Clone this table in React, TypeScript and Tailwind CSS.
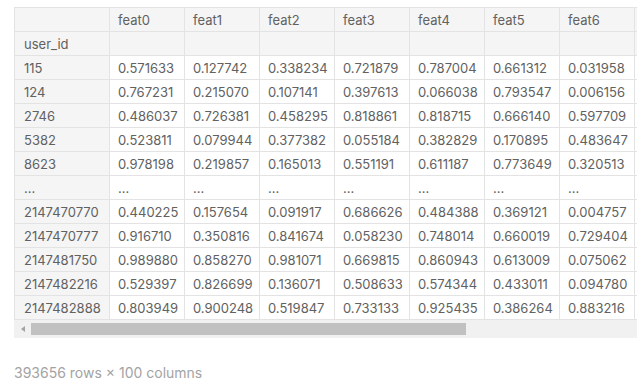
import React from 'react';

const cols = ['feat0', 'feat1', 'feat2', 'feat3', 'feat4', 'feat5', 'feat6', 'feat7'];

const rows: [string, string[]][] = [
  ['115', ['0.571633', '0.127742', '0.338234', '0.721879', '0.787004', '0.661312', '0.031958', '0.412345']],
  ['124', ['0.767231', '0.215070', '0.107141', '0.397613', '0.066038', '0.793547', '0.006156', '0.512345']],
  ['2746', ['0.486037', '0.726381', '0.458295', '0.818861', '0.818715', '0.666140', '0.597709', '0.312345']],
  ['5382', ['0.523811', '0.079944', '0.377382', '0.055184', '0.382829', '0.170895', '0.483647', '0.212345']],
  ['8623', ['0.978198', '0.219857', '0.165013', '0.551191', '0.611187', '0.773649', '0.320513', '0.112345']],
  ['...', ['...', '...', '...', '...', '...', '...', '...', '...']],
  ['2147470770', ['0.440225', '0.157654', '0.091917', '0.686626', '0.484388', '0.369121', '0.004757', '0.612345']],
  ['2147470777', ['0.916710', '0.350816', '0.841674', '0.058230', '0.748014', '0.660019', '0.729404', '0.712345']],
  ['2147481750', ['0.989880', '0.858270', '0.981071', '0.669815', '0.860943', '0.613009', '0.075062', '0.812345']],
  ['2147482216', ['0.529397', '0.826699', '0.136071', '0.508633', '0.574344', '0.433011', '0.094780', '0.912345']],
  ['2147482888', ['0.803949', '0.900248', '0.519847', '0.733133', '0.925435', '0.386264', '0.883216', '0.012345']],
];

const cell = 'h-[24px] border border-[#e3e3e3] px-[8px] text-left font-normal whitespace-nowrap overflow-hidden';

const App = () => {
  return (
    <div
      className="w-[637px] h-[390px] overflow-hidden bg-white text-[13px] leading-[16px] text-[#616161]"
      style={{ fontFamily: 'Inter, "Noto Sans", sans-serif' }}
    >
      <div className="pl-[14px] pt-[7px]">
        <div className="w-[623px] overflow-hidden">
          <table className="border-collapse table-fixed w-[695px]">
            <colgroup>
              <col className="w-[95px]" />
              {cols.map((c) => (
                <col key={c} className="w-[75px]" />
              ))}
            </colgroup>
            <thead>
              <tr className="bg-[#f5f5f5]">
                <th className={cell}></th>
                {cols.map((c) => (
                  <th key={c} className={cell}>
                    {c}
                  </th>
                ))}
              </tr>
              <tr className="bg-[#f5f5f5]">
                <th className={`${cell} pl-[9px]`}>user_id</th>
                {cols.map((c) => (
                  <th key={c} className={cell}></th>
                ))}
              </tr>
            </thead>
            <tbody>
              {rows.map(([id, vals]) => (
                <tr key={id}>
                  <th className={`${cell} pl-[9px] bg-[#f5f5f5]`}>{id}</th>
                  {vals.map((v, i) => (
                    <td key={i} className={`${cell} bg-white`}>
                      {v}
                    </td>
                  ))}
                </tr>
              ))}
            </tbody>
          </table>
          <div className="flex items-center h-[18px] bg-[#f1f1f1]">
            <div className="w-[17px] flex justify-center">
              <svg width="4" height="6" viewBox="0 0 4 6">
                <path d="M4 0 L0 3 L4 6 Z" fill="#a3a3a3" />
              </svg>
            </div>
            <div className="h-[12px] w-[435px] bg-[#c1c1c1]"></div>
          </div>
        </div>
        <div className="mt-[25px] text-[14px] leading-[20px] text-[#a3a3a3]">393656 rows × 100 columns</div>
      </div>
    </div>
  );
};

export default App;
